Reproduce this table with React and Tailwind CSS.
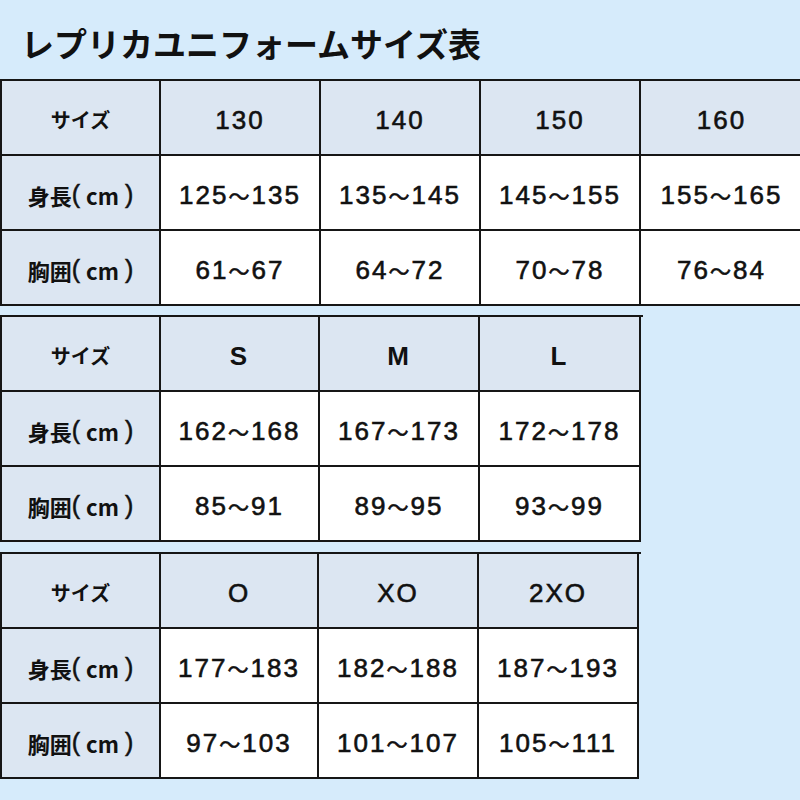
import React from "react";

const tables = [
  {
    cols: "grid-cols-[159px_160px_160px_160px_163px]",
    width: "w-[804px]",
    mt: "mt-0",
    bold: false,
    sizes: ["130", "140", "150", "160"],
    height: [["125", "135"], ["135", "145"], ["145", "155"], ["155", "165"]],
    chest: [["61", "67"], ["64", "72"], ["70", "78"], ["76", "84"]],
  },
  {
    cols: "grid-cols-[159px_159px_160px_161px]",
    width: "w-[641px]",
    mt: "mt-[9px]",
    bold: true,
    sizes: ["S", "M", "L"],
    height: [["162", "168"], ["167", "173"], ["172", "178"]],
    chest: [["85", "91"], ["89", "95"], ["93", "99"]],
  },
  {
    cols: "grid-cols-[159px_158px_160px_160px]",
    width: "w-[639px]",
    mt: "mt-[10px]",
    bold: false,
    sizes: ["O", "XO", "2XO"],
    height: [["177", "183"], ["182", "188"], ["187", "193"]],
    chest: [["97", "103"], ["101", "107"], ["105", "111"]],
  },
];

function Label({ children }) {
  return (
    <div className="h-[75px] bg-[#dce6f2] border-r-2 border-b-2 border-[#161616] flex items-center justify-center pt-[5px] text-[22px] font-bold text-[#111] font-['Noto_Sans_CJK_JP',sans-serif]">
      {children}
    </div>
  );
}

function Cell({ children, head, bold }) {
  return (
    <div
      className={`h-[75px] ${head ? "bg-[#dce6f2]" : "bg-white"} ${bold ? "font-bold" : "[-webkit-text-stroke:0.6px_#111]"} border-r-2 border-b-2 border-[#161616] flex items-center justify-center pt-[6px] text-[26px] tracking-[2px] text-[#111] font-['Liberation_Sans','Noto_Sans_CJK_JP',sans-serif]`}
    >
      {children}
    </div>
  );
}

function Range({ r }) {
  return (
    <Cell>
      <span>{r[0]}</span>
      <span className="text-[21px] font-['Noto_Sans_CJK_JP',sans-serif] tracking-[2px]">〜</span>
      <span>{r[1]}</span>
    </Cell>
  );
}

function RowLabel({ name }) {
  return (
    <Label>
      <span>{name}</span>
      <span className="text-[25px] font-normal font-['Liberation_Sans',sans-serif] [-webkit-text-stroke:0.5px_#111]">(</span>
      <span className="mx-[6px]">cm</span>
      <span className="text-[25px] font-normal font-['Liberation_Sans',sans-serif] [-webkit-text-stroke:0.5px_#111]">)</span>
    </Label>
  );
}

function SizeTable({ t }) {
  return (
    <div className={`${t.mt} ${t.width} grid ${t.cols} border-l-2 border-t-2 border-[#161616] box-content`}>
      <Label>
        <span className="text-[20px]">サイズ</span>
      </Label>
      {t.sizes.map((s) => (
        <Cell key={s} head bold={t.bold}>
          {s}
        </Cell>
      ))}
      <RowLabel name="身長" />
      {t.height.map((r) => (
        <Range key={r[0]} r={r} />
      ))}
      <RowLabel name="胸囲" />
      {t.chest.map((r) => (
        <Range key={r[0]} r={r} />
      ))}
    </div>
  );
}

export default function App() {
  return (
    <div className="w-[800px] h-[800px] overflow-hidden bg-[#d6ebfb]">
      <div className="h-[79px] flex items-center pl-[21px] pt-[8px]">
        <h1 className="text-[33px] font-bold text-[#111] leading-none font-['Noto_Sans_CJK_JP',sans-serif]">
          レプリカユニフォームサイズ表
        </h1>
      </div>
      {tables.map((t, i) => (
        <SizeTable key={i} t={t} />
      ))}
    </div>
  );
}
